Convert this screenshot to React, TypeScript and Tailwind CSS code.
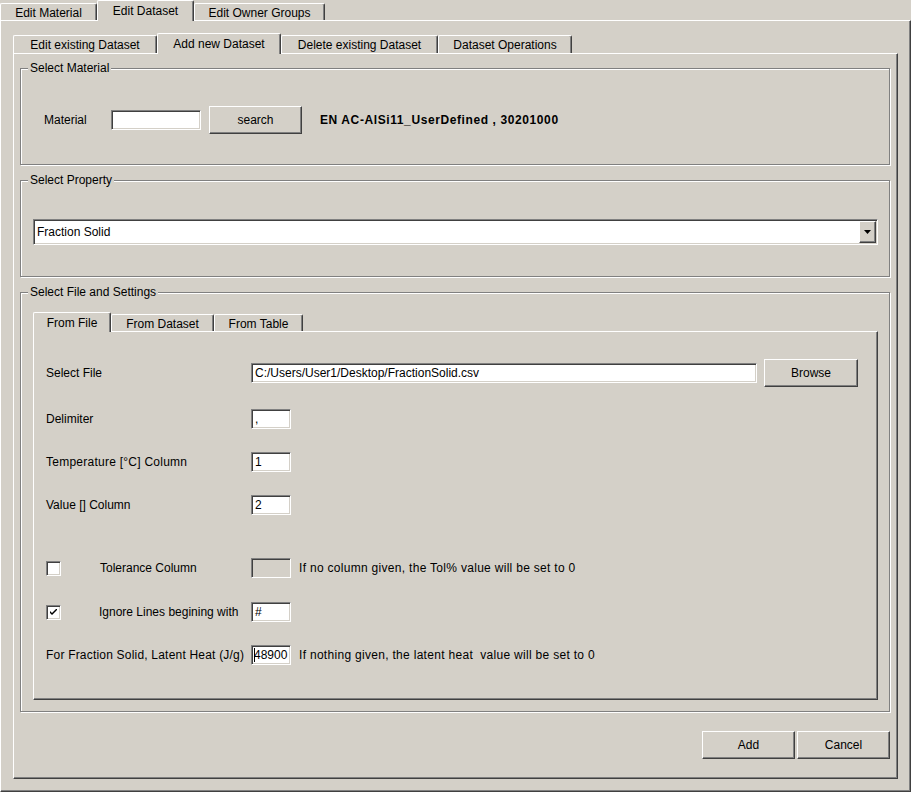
import React from "react";

const raised =
  "border border-t-white border-l-white border-r-[#404040] border-b-[#404040] shadow-[inset_-1px_-1px_0_#808080] bg-[#d4d0c8]";
const sunken =
  "border border-t-[#808080] border-l-[#808080] border-r-white border-b-white shadow-[inset_1px_1px_0_#404040,inset_-1px_-1px_0_#d4d0c8]";

function Tab({
  label,
  selected,
  size,
}: {
  label: string;
  selected?: boolean;
  size: string;
}) {
  return (
    <div
      className={`${size} flex shrink-0 items-center justify-center whitespace-nowrap rounded-t-[2px] border-l border-r border-t border-l-white border-r-[#404040] border-t-white bg-[#d4d0c8] shadow-[inset_-1px_0_0_#808080] ${
        selected ? "relative z-10 -mb-px" : "pt-[1px]"
      }`}
    >
      {label}
    </div>
  );
}

function Button({ label, size }: { label: string; size: string }) {
  return (
    <button type="button" className={`${raised} ${size} flex shrink-0 items-center justify-center`}>
      {label}
    </button>
  );
}

function Field({
  value,
  size,
  disabled,
  caret,
}: {
  value?: string;
  size: string;
  disabled?: boolean;
  caret?: boolean;
}) {
  return (
    <div
      className={`${sunken} ${size} flex shrink-0 items-center overflow-hidden pl-[3px] ${
        disabled ? "bg-[#d4d0c8]" : "bg-white"
      }`}
    >
      {caret ? <span className="-ml-px h-[14px] w-px bg-black" /> : null}
      <span className={caret ? "-ml-[1px]" : ""}>{value}</span>
    </div>
  );
}

function Check({ checked }: { checked?: boolean }) {
  return (
    <div className={`${sunken} flex h-[15px] w-[15px] items-center justify-center bg-white`}>
      {checked ? (
        <svg width="7" height="7" viewBox="0 0 7 7">
          <path d="M0 2 L0 4 L2 6 L7 1 L7 -1 L2 4 Z" fill="#000" />
        </svg>
      ) : null}
    </div>
  );
}

function Group({
  title,
  className,
  children,
}: {
  title: string;
  className: string;
  children: React.ReactNode;
}) {
  return (
    <div
      className={`relative border border-[#808080] shadow-[inset_1px_1px_0_#fff,1px_1px_0_#fff] ${className}`}
    >
      <div className="absolute -top-[8px] left-[7px] bg-[#d4d0c8] px-[2px] leading-[14px]">
        {title}
      </div>
      {children}
    </div>
  );
}

export default function App() {
  return (
    <div className="h-[792px] w-[911px] overflow-hidden bg-[#d4d0c8] font-['Liberation_Sans',Arial,sans-serif] text-[12px] leading-[14px] text-black">
      {/* top tabs */}
      <div className="flex h-[20px] items-end">
        <Tab label="Edit Material" size="w-[97px] h-[17px]" />
        <Tab label="Edit Dataset" selected size="w-[97px] h-[21px]" />
        <Tab label="Edit Owner Groups" size="w-[131px] h-[17px]" />
      </div>

      <div className="h-[772px] border border-t-white border-l-white border-r-[#404040] border-b-[#404040] px-[12px] pt-[12px] shadow-[inset_-1px_-1px_0_#808080]">
        {/* dataset tabs */}
        <div className="flex h-[20px] items-end">
          <Tab label="Edit existing Dataset" size="w-[144px] h-[18px]" />
          <Tab label="Add new Dataset" selected size="w-[124px] h-[21px]" />
          <Tab label="Delete existing Dataset" size="w-[157px] h-[18px]" />
          <Tab label="Dataset Operations" size="w-[134px] h-[18px]" />
        </div>

        <div className="h-[726px] border border-t-white border-l-white border-r-[#404040] border-b-[#404040] pl-[6px] pr-[7px] pt-[14px] shadow-[inset_-1px_-1px_0_#808080]">
          <Group title="Select Material" className="h-[97px] pl-[23px] pt-[37px]">
            <div className="flex h-[28px] items-center">
              <div className="w-[67px]">Material</div>
              <Field size="w-[90px] h-[20px]" />
              <div className="ml-[8px]">
                <Button label="search" size="w-[93px] h-[28px]" />
              </div>
              <div className="ml-[18px] font-bold tracking-[0.6px]">
                EN AC-AlSi11_UserDefined , 30201000
              </div>
            </div>
          </Group>

          <Group title="Select Property" className="mt-[15px] h-[97px] pl-[12px] pr-[11px] pt-[38px]">
            <div className={`${sunken} flex h-[26px] items-stretch bg-white py-[1px] pr-[1px]`}>
              <div className="flex flex-1 items-center pl-[3px]">Fraction Solid</div>
              <div className={`${raised} flex w-[17px] items-center justify-center`}>
                <svg width="7" height="5" viewBox="0 0 7 5">
                  <path d="M0 0 H7 L3.5 4 Z" fill="#000" />
                </svg>
              </div>
            </div>
          </Group>

          <Group
            title="Select File and Settings"
            className="mt-[15px] h-[420px] pl-[12px] pr-[11px] pt-[19px]"
          >
            <div className="flex h-[19px] items-end">
              <Tab label="From File" selected size="w-[78px] h-[20px]" />
              <Tab label="From Dataset" size="w-[103px] h-[17px]" />
              <Tab label="From Table" size="w-[89px] h-[17px]" />
            </div>
            <div className="h-[369px] border border-t-white border-l-white border-r-[#404040] border-b-[#404040] pl-[12px] pt-[27px] shadow-[inset_-1px_-1px_0_#808080]">
              <div className="flex h-[28px] items-center">
                <div className="w-[205px]">Select File</div>
                <Field value="C:/Users/User1/Desktop/FractionSolid.csv" size="w-[506px] h-[20px]" />
                <div className="ml-[7px]">
                  <Button label="Browse" size="w-[94px] h-[28px]" />
                </div>
              </div>

              <div className="mt-[22px] flex h-[20px] items-center">
                <div className="w-[205px]">Delimiter</div>
                <Field value="," size="w-[40px] h-[20px]" />
              </div>

              <div className="mt-[23px] flex h-[20px] items-center">
                <div className="w-[205px] tracking-[0.25px]">Temperature [°C] Column</div>
                <Field value="1" size="w-[40px] h-[20px]" />
              </div>

              <div className="mt-[23px] flex h-[20px] items-center">
                <div className="w-[205px]">Value [] Column</div>
                <Field value="2" size="w-[40px] h-[20px]" />
              </div>

              <div className="mt-[43px] flex h-[20px] items-center">
                <div className="w-[54px]">
                  <Check />
                </div>
                <div className="w-[151px]">Tolerance Column</div>
                <Field size="w-[40px] h-[20px]" disabled />
                <div className="ml-[8px] tracking-[0.3px]">
                  If no column given, the Tol% value will be set to 0
                </div>
              </div>

              <div className="mt-[24px] flex h-[20px] items-center">
                <div className="w-[53px]">
                  <Check checked />
                </div>
                <div className="w-[152px]">Ignore Lines begining with</div>
                <Field value="#" size="w-[40px] h-[20px]" />
              </div>

              <div className="mt-[23px] flex h-[20px] items-center">
                <div className="w-[205px] tracking-[0.2px]">For Fraction Solid, Latent Heat (J/g)</div>
                <Field value="48900" size="w-[40px] h-[20px]" caret />
                <div className="ml-[8px] whitespace-pre tracking-[0.3px]">
                  If nothing given, the latent heat  value will be set to 0
                </div>
              </div>
            </div>
          </Group>

          <div className="mt-[19px] flex justify-end gap-[2px]">
            <Button label="Add" size="w-[93px] h-[28px]" />
            <Button label="Cancel" size="w-[93px] h-[28px]" />
          </div>
        </div>
      </div>
    </div>
  );
}
